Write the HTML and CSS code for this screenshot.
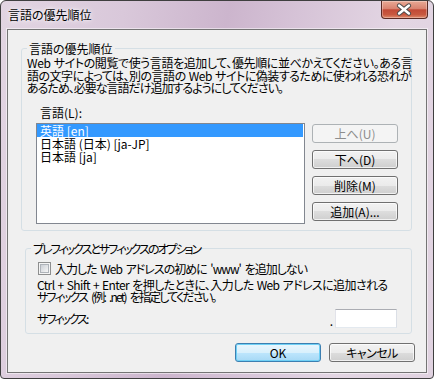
FILE: index.html
```html
<!DOCTYPE html>
<html lang="ja">

<head>
    <meta charset="UTF-8">
    <meta name="viewport" content="width=device-width, initial-scale=1.0">
    <title>言語の優先順位</title>
    <link rel="stylesheet" href="styles.css">
</head>

<body>
    <div class="window">
        <div class="titlebar">
            <span class="title">言語の優先順位</span>
            <span class="close">
                <svg width="47" height="18" viewBox="0 0 47 18">
                    <path d="M18.5 4.5 L28.5 12.5 M28.5 4.5 L18.5 12.5" stroke="#4a4a4a" stroke-width="4.6" stroke-linecap="round" fill="none"/>
                    <path d="M18.5 4.5 L28.5 12.5 M28.5 4.5 L18.5 12.5" stroke="#fff" stroke-width="2.6" stroke-linecap="round" fill="none"/>
                </svg>
            </span>
        </div>
        <div class="client">
            <fieldset class="group">
                <legend>言語の優先順位</legend>
                <p class="note">
                    <span class="line ls-04">Web サイトの閲覧で使う言語を追加して、優先順に並べかえてください。ある言</span>
                    <span class="line ls-05">語の文字によっては、別の言語の Web サイトに偽装するために使われる恐れが</span>
                    <span class="line ls-10">あるため、必要な言語だけ追加するようにしてください。</span>
                </p>
                <div class="lang-label">言語(L):</div>
                <div class="lang-row">
                    <ul class="lang-list">
                        <li class="selected">英語 [en]</li>
                        <li>日本語 (日本) [ja-JP]</li>
                        <li>日本語 [ja]</li>
                    </ul>
                    <div class="side-buttons">
                        <button disabled>上へ(U)</button>
                        <button>下へ(D)</button>
                        <button>削除(M)</button>
                        <button>追加(A)...</button>
                    </div>
                </div>
            </fieldset>
            <fieldset class="group group-suffix">
                <legend class="ls-20">プレフィックスとサフィックスのオプション</legend>
                <label class="check-row">
                    <span class="check"><span class="check-inner"></span></span>
                    <span class="ls-10">入力した Web アドレスの初めに 'www' を追加しない</span>
                </label>
                <p class="note note-suffix">
                    <span class="line ls-06">Ctrl + Shift + Enter を押したときに、入力した Web アドレスに追加される</span>
                    <span class="line ls-18">サフィックス (例: .net) を指定してください。</span>
                </p>
                <div class="suffix-row">
                    <span class="ls-20">サフィックス:</span>
                    <span class="suffix-field"><span class="dot">.</span><span class="textbox"></span></span>
                </div>
            </fieldset>
            <div class="dialog-buttons">
                <button class="default">OK</button>
                <button class="ls-05">キャンセル</button>
            </div>
        </div>
    </div>
</body>

</html>
```

FILE: styles.css
```css
* {
    box-sizing: border-box;
}

html,
body {
    margin: 0;
}

body {
    background: #fff;
    font-family: "Noto Sans CJK JP", sans-serif;
    font-size: 12px;
    font-feature-settings: "palt";
    color: #000;
}

/* MS UI Gothic is narrower than Noto, so lines are tightened one by one */
.ls-04 { letter-spacing: -0.4px; word-spacing: 1px; }
.ls-05 { letter-spacing: -0.5px; word-spacing: 1px; }
.ls-06 { letter-spacing: -0.6px; word-spacing: 1px; }
.ls-10 { letter-spacing: -1px; word-spacing: 2px; }
.ls-18 { letter-spacing: -1.8px; word-spacing: 3px; }
.ls-20 { letter-spacing: -2px; }

.window {
    width: 434px;
    height: 379px;
    border: 1px solid #3f3f3f;
    border-radius: 6px 6px 4px 4px;
    background: linear-gradient(100deg, #e2d5e2 0%, #d9c8da 25%, #ccb5cd 46%, #d6c3d7 60%, #e3d6e3 80%, #e0d2e0 100%);
    display: flex;
    flex-direction: column;
    overflow: hidden;
}

.titlebar {
    height: 28px;
    display: flex;
    align-items: flex-start;
    padding-left: 7px;
}

.title {
    line-height: 13px;
    margin-top: 7px;
    text-shadow: 0 0 6px #fff, 0 0 3px rgba(255, 255, 255, 0.8);
}

.close {
    width: 47px;
    height: 18px;
    margin-left: auto;
    margin-right: 5px;
    border: 1px solid #5a2a24;
    border-top: none;
    border-radius: 0 0 4px 4px;
    background: linear-gradient(#e9a995 0%, #d98370 45%, #c24a36 52%, #c85940 80%, #e08a6c 100%);
    box-shadow: inset 0 0 0 1px rgba(255, 255, 255, 0.3);
    display: flex;
}

.close svg {
    margin-left: -1px;
}

.client {
    margin: 0 6px;
    height: 344px;
    border: 1px solid #747474;
    box-shadow: 0 0 0 1px rgba(255, 255, 255, 0.5);
    background: #f0f0f0;
    padding: 12px 11px 0 13px;
    display: flex;
    flex-direction: column;
}

.group {
    margin: 0 3px 0 0;
    padding: 0 13px 6px 5px;
    border: 1px solid #d5dfe5;
    border-radius: 3px;
    min-width: 0;
}

.group legend {
    padding: 0 2px;
    margin: 0;
    line-height: 13px;
}

.note {
    margin: 2px 0 0;
    line-height: 12.5px;
    white-space: nowrap;
}

.line {
    display: block;
}

.lang-label {
    margin: 11.5px 0 4px 13px;
    line-height: 13px;
}

.lang-row {
    display: flex;
    gap: 7px;
    margin-left: 9px;
}

.lang-list {
    flex: 1;
    height: 101px;
    margin: 0;
    padding: 0 1px 0 0;
    list-style: none;
    background: #fff;
    border: 1px solid #828790;
}

.lang-list li {
    line-height: 13px;
    padding-left: 3px;
    white-space: nowrap;
}

.lang-list .selected {
    background: #3399ff;
    color: #fff;
}

.side-buttons {
    display: flex;
    flex-direction: column;
    gap: 7px;
    margin-top: 1px;
}

button {
    width: 86px;
    height: 19px;
    padding: 0;
    font: inherit;
    line-height: 17px;
    color: #000;
    border: 1px solid #707070;
    border-radius: 3px;
    background: linear-gradient(#f2f2f2 0%, #ebebeb 50%, #dddddd 50%, #cfcfcf 100%);
    box-shadow: inset 0 0 0 1px rgba(255, 255, 255, 0.7);
}

button:disabled {
    color: #8d8d8d;
    border-color: #adb2b5;
    background: #f4f4f4;
    box-shadow: none;
}

button.default {
    border-color: #3c7fb1;
    background: linear-gradient(#eaf6fd 0%, #d9f0fc 50%, #bee6fd 50%, #a7d9f5 100%);
    box-shadow: inset 0 0 0 1px #6fd0f5;
}

.group-suffix {
    margin-top: 11px;
    margin-left: 4px;
    padding-right: 14px;
    padding-bottom: 5px;
}

.check-row {
    display: flex;
    align-items: center;
    gap: 4px;
    height: 13px;
    margin: 7px 0 0 7px;
    line-height: 13px;
    white-space: nowrap;
}

.check {
    width: 13px;
    height: 13px;
    border: 1px solid #8e8f8f;
    background: #f4f4f4;
    padding: 1px;
    display: flex;
}

.check-inner {
    flex: 1;
    border: 1px solid #aeb3b9;
    background: linear-gradient(135deg, #cbcfd5, #f6f6f6);
}

.note-suffix {
    margin: 4px 0 0 6px;
    line-height: 12px;
}

.suffix-row {
    display: flex;
    align-items: center;
    justify-content: space-between;
    height: 19px;
    margin: 6px 0 0 6px;
}

.suffix-field {
    display: flex;
    align-items: center;
}

.dot {
    margin: 0 2px 0 0;
    line-height: 13px;
    padding-top: 4px;
}

.textbox {
    width: 62px;
    height: 19px;
    background: #fff;
    border: 1px solid;
    border-color: #abadb3 #dbdfe6 #e3e9ef #e2e3ea;
}

.dialog-buttons {
    display: flex;
    justify-content: flex-end;
    gap: 8px;
    margin-top: 9px;
}
```
